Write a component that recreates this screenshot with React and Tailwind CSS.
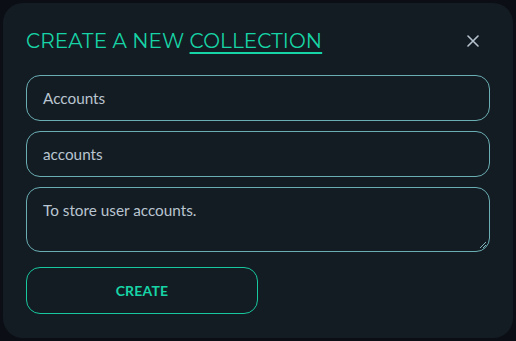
import React from "react";

export default function App() {
  return (
    <div className="w-[516px] h-[341px] bg-[#0b0f15] p-[3px] overflow-hidden">
      <div className="w-full h-full bg-[#141c23] rounded-[20px] px-[23px] pt-[24px] flex flex-col">
        <div className="flex items-center justify-between h-[28px] pr-[4px]">
          <h1 className="text-[20px] text-[#17d4a6] tracking-[0.1px] font-['Montserrat','Open_Sans',sans-serif]">
            CREATE A NEW <span className="underline underline-offset-[4px] decoration-[2px]">COLLECTION</span>
          </h1>
          <svg width="12" height="12" viewBox="0 0 12 12" className="mr-[7px]">
            <path d="M1 1L11 11M11 1L1 11" stroke="#b6c3cf" strokeWidth="1.6" strokeLinecap="round" />
          </svg>
        </div>
        <div className="mt-[20px] flex flex-col gap-[10px] w-[464px]">
          <div className="h-[46px] rounded-[14px] border-[1.5px] border-[#6aaeb3] flex items-center px-[16px] text-[15.3px] text-[#b9c5d0] font-['Lato',sans-serif]">
            Accounts
          </div>
          <div className="h-[46px] rounded-[14px] border-[1.5px] border-[#6aaeb3] flex items-center px-[16px] text-[15.3px] text-[#b9c5d0] font-['Lato',sans-serif]">
            accounts
          </div>
          <div className="relative h-[65px] rounded-[14px] border-[1.5px] border-[#6aaeb3] px-[16px] pt-[11px] text-[15.3px] text-[#b9c5d0] font-['Lato',sans-serif]">
            To store user accounts.
            <svg width="8" height="8" viewBox="0 0 8 8" className="absolute right-[2px] bottom-[2px]">
              <path d="M7 1L1 7M7 4L4 7" stroke="#7fb4b8" strokeWidth="1" />
            </svg>
          </div>
        </div>
        <button className="mt-[15px] w-[232px] h-[47px] rounded-[14px] border-[1.5px] border-[#17c79e] text-[#17d4a6] text-[14px] font-bold tracking-[0.2px] font-['Lato',sans-serif]">
          CREATE
        </button>
      </div>
    </div>
  );
}
